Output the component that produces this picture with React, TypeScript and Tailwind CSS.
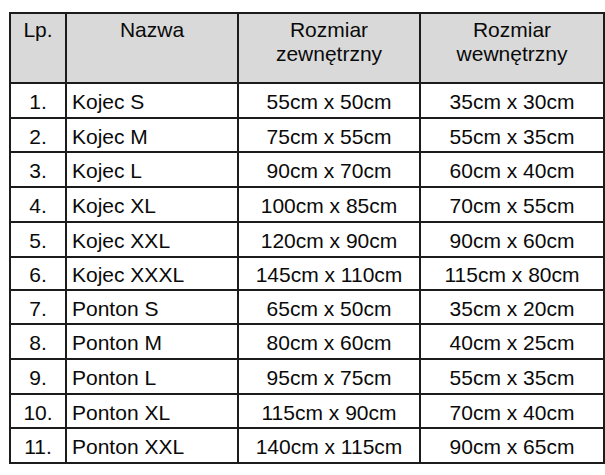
const rows = [
  ["1.", "Kojec S", "55cm x 50cm", "35cm x 30cm", "h-[35px]"],
  ["2.", "Kojec M", "75cm x 55cm", "55cm x 35cm", "h-[34px]"],
  ["3.", "Kojec L", "90cm x 70cm", "60cm x 40cm", "h-[35px]"],
  ["4.", "Kojec XL", "100cm x 85cm", "70cm x 55cm", "h-[35px]"],
  ["5.", "Kojec XXL", "120cm x 90cm", "90cm x 60cm", "h-[35px]"],
  ["6.", "Kojec XXXL", "145cm x 110cm", "115cm x 80cm", "h-[33px]"],
  ["7.", "Ponton S", "65cm x 50cm", "35cm x 20cm", "h-[34px]"],
  ["8.", "Ponton M", "80cm x 60cm", "40cm x 25cm", "h-[35px]"],
  ["9.", "Ponton L", "95cm x 75cm", "55cm x 35cm", "h-[35px]"],
  ["10.", "Ponton XL", "115cm x 90cm", "70cm x 40cm", "h-[34px]"],
  ["11.", "Ponton XXL", "140cm x 115cm", "90cm x 65cm", "h-[35px]"],
];

const cols = "grid grid-cols-[56px_172px_182px_184px]";
const cell = "border-r-2 border-b-2 border-[#1c1c1c]";

const App = () => {
  return (
    <div className="w-[605px] h-[475px] bg-white pt-[12px] pl-[9px] text-[21px] text-[#0a0a0a] font-['Liberation_Sans',Arial,sans-serif]">
      <div className="w-[596px] border-l-2 border-t-2 border-[#1c1c1c]">
        <div className={`${cols} h-[70px] bg-[#d9d9d9] leading-[24px] text-center`}>
          <div className={`${cell} pt-[4px]`}>Lp.</div>
          <div className={`${cell} pt-[4px]`}>Nazwa</div>
          <div className={`${cell} pt-[4px]`}>
            Rozmiar
            <br />
            zewnętrzny
          </div>
          <div className={`${cell} pt-[4px]`}>
            Rozmiar
            <br />
            wewnętrzny
          </div>
        </div>
        {rows.map(([lp, name, outer, inner, h]) => (
          <div key={lp} className={`${cols} ${h} leading-[24px]`}>
            <div className={`${cell} flex items-center justify-center pt-[3px]`}>{lp}</div>
            <div className={`${cell} flex items-center pl-[5px] pt-[3px]`}>{name}</div>
            <div className={`${cell} flex items-center justify-center pt-[3px]`}>{outer}</div>
            <div className={`${cell} flex items-center justify-center pt-[3px]`}>{inner}</div>
          </div>
        ))}
      </div>
    </div>
  );
};

export default App;
